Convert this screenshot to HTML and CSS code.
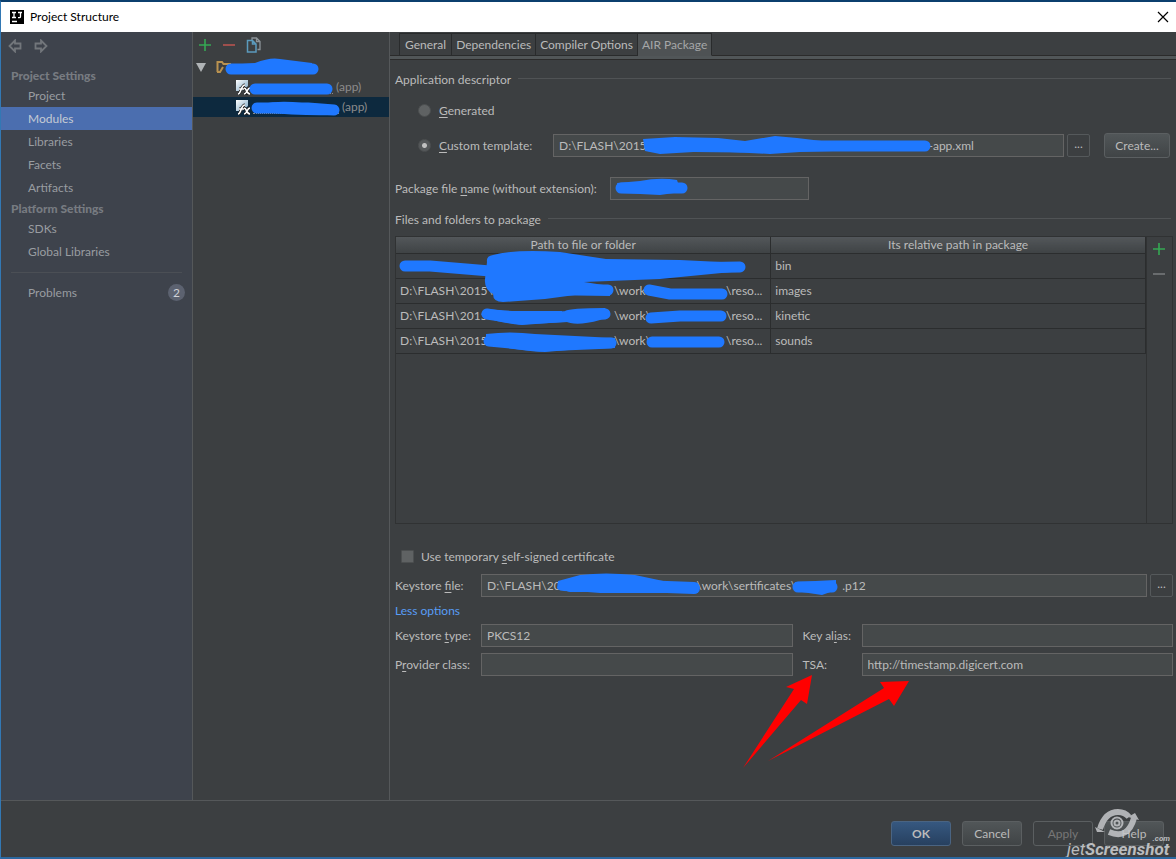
FILE: index.html
```html
<!DOCTYPE html>
<html lang="en">
<head>
<meta charset="utf-8">
<title>Project Structure</title>
<link rel="stylesheet" href="styles.css">
</head>
<body>
<div class="window">
  <header class="titlebar">
    <svg class="logo" width="14" height="14" viewBox="0 0 14 14" aria-hidden="true"><rect width="14" height="14" fill="#000"/><path d="M2 2.500h4M4 2.500v5M2 7.500h4M8 2.500h4M10.500 2.500v4q0 1.200-1.200 1.200H8M2 11.500h5" fill="none" stroke="#fff" stroke-width="1.300"/></svg>
    <h1 class="title">Project Structure</h1>
    <button class="close" aria-label="Close"><svg width="12" height="12" viewBox="0 0 12 12"><path d="M1 1l10 10M11 1L1 11" stroke="#000" stroke-width="1.200"/></svg></button>
  </header>

  <div class="body">
    <nav class="sidebar">
      <div class="history">
        <button class="icon" aria-label="Back"><svg width="14" height="14" viewBox="0 0 14 14"><path d="M7 1.500L1.500 7 7 12.500V9.500h5.500v-5H7z" fill="none" stroke="#72767b" stroke-width="1.800"/></svg></button>
        <button class="icon" aria-label="Forward"><svg width="14" height="14" viewBox="0 0 14 14"><path d="M7 1.500L12.500 7 7 12.500V9.500H1.500v-5H7z" fill="none" stroke="#72767b" stroke-width="1.800"/></svg></button>
      </div>
      <h2 class="section">Project Settings</h2>
      <a class="item" href="#">Project</a>
      <a class="item current" href="#">Modules</a>
      <a class="item" href="#">Libraries</a>
      <a class="item" href="#">Facets</a>
      <a class="item" href="#">Artifacts</a>
      <h2 class="section">Platform Settings</h2>
      <a class="item" href="#">SDKs</a>
      <a class="item" href="#">Global Libraries</a>
      <hr class="divider">
      <a class="item" href="#">Problems <span class="count">2</span></a>
    </nav>

    <section class="modules">
      <div class="tools">
        <button class="icon" aria-label="Add"><svg width="14" height="14" viewBox="0 0 14 14"><path d="M7 1v12M1 7h12" stroke="#35a853" stroke-width="1.600"/></svg></button>
        <button class="icon" aria-label="Remove"><svg width="14" height="14" viewBox="0 0 14 14"><path d="M1 7h12" stroke="#b85450" stroke-width="1.600"/></svg></button>
        <button class="icon" aria-label="Copy"><svg width="16" height="16" viewBox="0 0 16 16" fill="none"><path d="M6 3V1h4.500L14 4.500V12.500h-2.500M10.500 1v3.500H14" stroke="#8b9398" stroke-width="1.300"/><path d="M1.500 3.500h5L10 7v8H1.500zM6.500 3.500V7H10" stroke="#5b9bbd" stroke-width="1.500"/></svg></button>
      </div>
      <div class="row">
        <svg width="10" height="10" viewBox="0 0 10 10"><path d="M0 1h10L5 10z" fill="#b0b4b6"/></svg>
        <svg class="folder" width="16" height="14" viewBox="0 0 16 14"><path d="M1.500 12V2H6l1.500 2H14v7M1 12h3l3-5" fill="none" stroke="#b99250" stroke-width="2"/></svg>
      </div>
      <div class="row child">
        <svg width="16" height="16" viewBox="0 0 16 16"><defs><linearGradient id="fx" x2="1" y2="1"><stop stop-color="#fff"/><stop offset="1" stop-color="#7aa6c4"/></linearGradient></defs><path d="M1 1h12v6L7 12H1z" fill="url(#fx)"/><path d="M3 15c3 0 3-9 7-9M4 10h5M9 9c3 0 2 6 6 6M15 9c-3 0-3 6-6 6" fill="none" stroke="#222" stroke-width="3"/><path d="M3 15c3 0 3-9 7-9M4 10h5M9 9c3 0 2 6 6 6M15 9c-3 0-3 6-6 6" fill="none" stroke="#fff" stroke-width="1.600"/></svg>
        <span class="name short"></span><span>(app)</span>
      </div>
      <div class="row child selected">
        <svg width="16" height="16" viewBox="0 0 16 16"><path d="M1 1h12v6L7 12H1z" fill="url(#fx)"/><path d="M3 15c3 0 3-9 7-9M4 10h5M9 9c3 0 2 6 6 6M15 9c-3 0-3 6-6 6" fill="none" stroke="#222" stroke-width="3"/><path d="M3 15c3 0 3-9 7-9M4 10h5M9 9c3 0 2 6 6 6M15 9c-3 0-3 6-6 6" fill="none" stroke="#fff" stroke-width="1.600"/></svg>
        <span class="name"></span><span>(app)</span>
      </div>
    </section>

    <main class="main">
      <div class="tabs" role="tablist">
        <button class="tab" role="tab">General</button>
        <button class="tab" role="tab">Dependencies</button>
        <button class="tab" role="tab">Compiler Options</button>
        <button class="tab active" role="tab" aria-selected="true">AIR Package</button>
      </div>
      <form class="form">
        <h3 class="group">Application descriptor</h3>
        <div class="line option"><input type="radio" name="descriptor" id="generated" class="radio"><label for="generated"><u>G</u>enerated</label></div>
        <div class="line option last">
          <input type="radio" name="descriptor" id="custom" class="radio" checked><label for="custom" class="custom-label"><u>C</u>ustom template:</label>
          <input class="field grow" type="text" aria-label="Template path" value="D:\FLASH\2015\                                                                                          -app.xml">
          <button type="button" class="browse" aria-label="Browse template">...</button>
          <button type="button" class="btn create">Create...</button>
        </div>
        <div class="line package"><label for="package" class="package-label">Package file <u>n</u>ame (without extension):</label><input class="field" type="text" id="package"></div>
        <h3 class="group">Files and folders to package</h3>
        <div class="files">
          <div class="scroll">
            <table class="table">
              <thead><tr><th>Path to file or folder</th><th>Its relative path in package</th></tr></thead>
              <tbody>
                <tr><td></td><td>bin</td></tr>
                <tr><td><div class="path"><span class="root">D:\FLASH\2015\</span><span class="work">\work\</span><span>\reso...</span></div></td><td>images</td></tr>
                <tr><td><div class="path"><span class="root">D:\FLASH\2015\</span><span class="work">\work\</span><span>\reso...</span></div></td><td>kinetic</td></tr>
                <tr><td><div class="path"><span class="root">D:\FLASH\2015\</span><span class="work">\work\</span><span>\reso...</span></div></td><td>sounds</td></tr>
              </tbody>
            </table>
          </div>
          <div class="side">
            <button type="button" class="icon" aria-label="Add file"><svg width="14" height="14" viewBox="0 0 14 14"><path d="M7 1v12M1 7h12" stroke="#35a853" stroke-width="1.600"/></svg></button>
            <button type="button" class="icon" aria-label="Remove file"><svg width="14" height="14" viewBox="0 0 14 14"><path d="M1 7h12" stroke="#6f7274" stroke-width="1.800"/></svg></button>
          </div>
        </div>
        <div class="line certificate"><input type="checkbox" id="temp" class="check"><label for="temp">Use temporary <u>s</u>elf-signed certificate</label></div>
        <div class="line"><label class="key" for="keystore">Keystore <u>f</u>ile:</label><input class="field grow" type="text" id="keystore" value="D:\FLASH\201                                          \work\sertificates\               .p12"><button type="button" class="browse" aria-label="Browse keystore">...</button></div>
        <a class="less" href="#">Less options</a>
        <div class="pairs">
          <label for="type">Keystore <u>t</u>ype:</label><input class="field" type="text" id="type" value="PKCS12">
          <label class="second" for="alias">Key al<u>i</u>as:</label><input class="field" type="text" id="alias">
          <label for="provider">P<u>r</u>ovider class:</label><input class="field" type="text" id="provider">
          <label class="second" for="tsa">TSA:</label><input class="field" type="text" id="tsa" value="http://timestamp.digicert.com">
        </div>
      </form>
    </main>
  </div>

  <footer class="footer">
    <button class="btn primary">OK</button>
    <button class="btn">Cancel</button>
    <button class="btn" disabled>Apply</button>
    <button class="btn">Help</button>
  </footer>

  <svg class="marks" width="1176" height="859" aria-hidden="true">
    <g fill="none" stroke="#1f78ff" stroke-linecap="round" stroke-linejoin="round">
      <path d="M231 69L313 69" stroke-width="11"/>
      <path d="M255 89H327" stroke-width="11"/>
      <path d="M257 108H308L334 110" stroke-width="11"/>
      <path d="M405 266H430L490 271L740 267" stroke-width="11"/>
      <path d="M500 290H608M649 290L670 294H722" stroke-width="11"/>
      <path d="M487 314L520 319L560 317L605 314M651 318L680 316H721" stroke-width="11"/>
      <path d="M489 341L540 346L611 343M652 342H719" stroke-width="11"/>
      <path d="M798 587H832" stroke-width="11"/>
      <path d="M570 586L640 586L694 588" stroke-width="12"/>
      <path d="M650 146L740 147L800 146L925 146" stroke-width="11"/>
      <path d="M621 188H682" stroke-width="11"/>
    </g>
    <g fill="#1f78ff">
      <path d="M229 65L255 63Q270 57 280 59L312 63L312 74H229z"/>
      <path d="M262 104Q280 100 302 103Q320 103 336 108L334 115Q300 116 262 112z"/>
      <path d="M487 262Q486 256 493 255Q515 249 560 252L606 259L680 260L742 263V271L660 279L584 282L610 286V296L575 295L545 299L503 302Q493 302 493 294Q484 289 485 279z"/>
      <path d="M565 311Q570 308 605 308L610 314L600 320Q575 327 565 321z"/>
      <path d="M485 309L512 311H562V322L522 325Q500 323 488 318z"/>
      <path d="M486 334Q510 331 535 334L615 338V348L580 349L545 352Q520 351 500 346L486 345z"/>
      <path d="M558 581L580 575Q605 572 635 575L668 582L698 583V593H600L575 591Q558 592 557 588z"/>
      <path d="M795 582L836 580V590L822 595L795 591z"/>
      <path d="M643 139L675 137L718 138L745 141L775 136L797 138L830 142L900 141V149L800 152L770 154L710 151L660 154L645 151z"/>
      <path d="M617 183L640 181Q660 177 677 180L681 192L660 195L620 193z"/>
    </g>
    <g fill="#f00">
      <path d="M743 768L794 689L786 687L812 675L807 704L801 700z"/>
      <path d="M768 761L884 688L880 682L909 681L894 706L889 699z"/>
    </g>
  </svg>

  <div class="watermark">
    <svg width="46" height="32" viewBox="0 0 46 32" aria-hidden="true"><g fill="none" stroke="#c5c7ca"><path d="M5 21Q10 4 23 4Q30 4 34 9" stroke-width="6"/><path d="M14 24Q33 32 39 10" stroke-width="6"/><circle cx="22" cy="15" r="5.500" stroke-width="2"/><circle cx="22" cy="15" r="2.500" stroke-width="2"/></g><path d="M0 19l10 5-8 0zM33 9l7-4 4 7z" fill="#c5c7ca"/></svg>
    <span class="brand"><span class="jet">jet</span>Screenshot</span><span class="com">.com</span>
  </div>
</div>
</body>
</html>
```
FILE: styles.css
```css
* { box-sizing: border-box; }
body {
  margin: 0;
  background: #3c3f41;
  color: #bbb;
  font: 12px/16px Lato, "Noto Sans", sans-serif;
}
button, input { font: inherit; color: inherit; margin: 0; }
h1, h2, h3 { margin: 0; font-size: 12px; font-weight: 400; }
a { color: inherit; text-decoration: none; }
u { text-underline-offset: 2px; }
svg { display: block; flex: none; }
label { white-space: nowrap; }

.window {
  position: relative;
  display: flex;
  flex-direction: column;
  min-height: 100vh;
  border-top: 2px solid #0b3f6e;
  border-left: 1px solid #3278b4;
  border-bottom: 2px solid #2b679f;
  overflow: hidden;
}
.titlebar {
  display: flex;
  align-items: center;
  height: 30px;
  padding: 0 7px 0 9px;
  gap: 6px;
  background: #fff;
  color: #000;
}
.title { flex: 1; }
.close, .icon { display: block; padding: 0; border: 0; background: none; }

.body { flex: 1; display: flex; }
.sidebar {
  width: 192px;
  background: #3e434c;
  border-right: 1px solid #55585a;
  color: #999da1;
}
.history { display: flex; align-items: flex-start; gap: 12px; height: 34px; padding: 7px 7px; }
.section { height: 18px; padding: 2px 10px 0; font-weight: 900; color: #777b81; }
.item { display: flex; align-items: center; height: 23px; padding: 0 7px 0 27px; }
.current { background: #4b6eaf; color: #c5cbd4; }
.divider { height: 1px; margin: 9px 10px 8px; border: 0; background: #4b4f55; }
.count {
  width: 17px;
  margin-left: auto;
  border-radius: 9px;
  background: #5c6270;
  color: #d0d3d8;
  line-height: 17px;
  text-align: center;
}

.modules { width: 197px; border-right: 1px solid #55585a; color: #8c8c8c; }
.tools { display: flex; align-items: center; gap: 10px; height: 25px; padding: 0 5px; }
.row { display: flex; align-items: center; height: 20px; padding-left: 3px; }
.folder { margin-left: 10px; }
.child { padding-left: 42px; }
.selected { background: #0d293e; }
.name { width: 86px; height: 14px; margin: 0 3px 0 2px; border-bottom: 1px dotted #8c8c8c; }
.short { width: 80px; }

.main { flex: 1; min-width: 0; display: flex; flex-direction: column; }
.tabs {
  display: flex;
  height: 28px;
  padding: 1px 9px 0;
  background: linear-gradient(#2b2b2b, #2b2b2b) 0 23px / 100% 1px no-repeat, linear-gradient(#515658, #515658) 0 24px / 100% 3px no-repeat, linear-gradient(#2b2b2b, #2b2b2b) 0 27px / 100% 1px no-repeat;
}
.tab {
  height: 23px;
  padding: 0 4px;
  border: 1px solid #292b2c;
  border-left-width: 0;
  background: #3c3f41;
  white-space: nowrap;
}
.tab:first-child { border-left-width: 1px; padding: 0 5px; }
.active { background: #4e5254; border-bottom-color: #4e5254; color: #a5a7a8; }

.form { flex: 1; display: flex; flex-direction: column; padding: 12px 3px 0 5px; }
.group { display: flex; gap: 7px; height: 16px; }
.group::after { content: ""; flex: 1; height: 1px; margin: 6px 2px 0 0; background: #505355; }
.line { display: flex; align-items: center; height: 23px; }
.option { margin-top: 11px; padding-left: 23px; gap: 8px; }
.last { margin-top: 12px; }
.radio, .check { appearance: none; flex: none; width: 13px; height: 13px; background: #5f6263; border: 1px solid #4c4f50; }
.radio { border-radius: 50%; }
.radio:checked { background: radial-gradient(circle, #c0c0c0 0 2px, #55585a 3px); }
.custom-label { width: 106px; }
.field {
  min-width: 0;
  width: 100%;
  height: 23px;
  padding: 0 5px;
  border: 1px solid #646464;
  border-radius: 0;
  background: #45494a;
}
.grow { flex: 1; }
.browse {
  flex: none;
  width: 23px;
  height: 23px;
  margin-left: 3px;
  padding: 0 0 4px;
  border: 1px solid #55595b;
  border-radius: 2px;
  background: #3c3f41;
}
.option .browse { margin-left: -5px; }
.btn {
  width: 60px;
  height: 25px;
  padding: 0;
  border: 1px solid #5b5f61;
  border-radius: 3px;
  background: linear-gradient(#515658, #404446);
}
.create { flex: none; width: 66px; margin: 0 3px 0 6px; }
.package { margin: 20px 0 12px; }
.package-label { width: 215px; }
.package .field { width: 199px; }

.files { flex: 1; display: flex; min-height: 120px; margin: 8px 0 21px; border: 1px solid #303233; }
.scroll { flex: 1; border-right: 1px solid #303233; }
.table { width: 100%; border-collapse: collapse; table-layout: fixed; }
.table th {
  height: 16px;
  padding: 1px 0 0;
  border-right: 1px solid #2b2d2e;
  border-bottom: 1px solid #2b2d2e;
  background: linear-gradient(#53575a, #3f4345);
  font-weight: 400;
  line-height: 14px;
}
.table td { height: 25px; padding: 0 4px; border-right: 1px solid #2b2d2e; border-bottom: 1px solid #2b2d2e; }
.path { display: flex; }
.root { width: 214px; }
.work { width: 112px; }
.side { width: 25px; padding: 5px; display: flex; flex-direction: column; gap: 11px; }

.certificate { padding-left: 6px; gap: 7px; margin-bottom: 6px; }
.check { border-radius: 1px; }
.key { width: 86px; flex: none; }
.less { align-self: flex-start; margin: 6px 0 5px; color: #589df6; }
.pairs {
  display: grid;
  grid-template-columns: 86px 1fr 69px 1fr;
  gap: 6px 0;
  align-items: center;
  margin-bottom: 124px;
}
.second { padding-left: 10px; }

.footer {
  display: flex;
  justify-content: flex-end;
  align-items: flex-start;
  gap: 11px;
  height: 57px;
  padding: 20px 12px 0 0;
  border-top: 1px solid #55585a;
}
.primary { background: linear-gradient(#365880, #27405f); border-color: #4a6482; font-weight: 700; }
.btn:disabled { background: none; color: #777; }

.marks { position: absolute; top: -2px; left: -1px; pointer-events: none; }
.watermark {
  position: absolute;
  right: 5px;
  bottom: 0;
  width: 106px;
  height: 49px;
  color: #d0d2d4;
  opacity: .85;
  font-family: Roboto, sans-serif;
  font-style: italic;
  pointer-events: none;
}
.watermark svg { margin-left: 30px; }
.brand { position: absolute; left: 2px; bottom: 0; font-size: 17px; font-weight: 700; line-height: 16px; }
.jet { font-weight: 400; }
.com { position: absolute; right: 1px; bottom: 14px; font-size: 8px; font-weight: 700; line-height: 8px; }
```
